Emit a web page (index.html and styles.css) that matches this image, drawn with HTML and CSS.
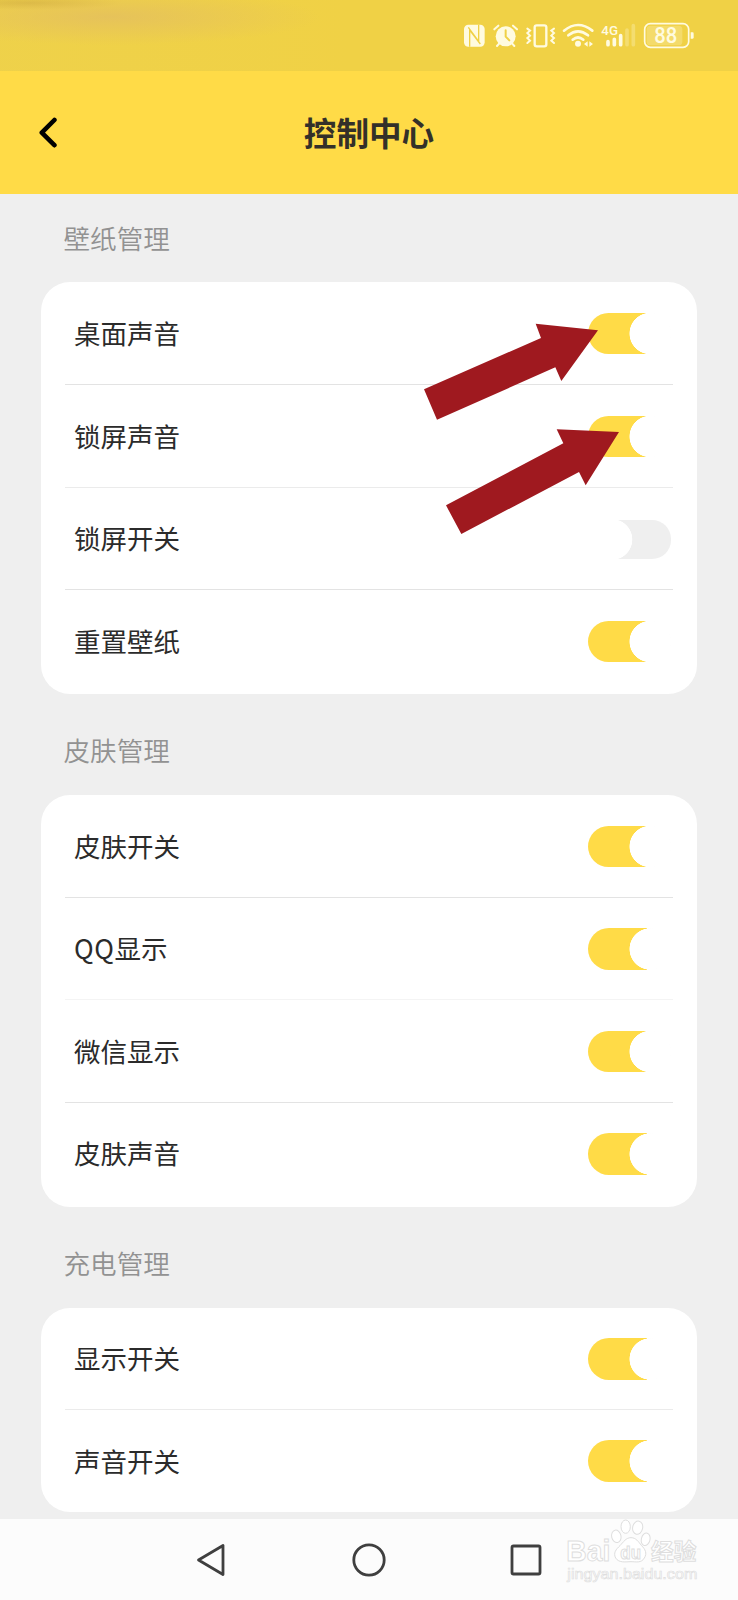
FILE: index.html
```html
<!DOCTYPE html>
<html lang="zh-CN">
<head>
<meta charset="utf-8">
<title>控制中心</title>
<link rel="stylesheet" href="styles.css">
</head>
<body>
<div class="screen">
  <div class="status">
    <svg class="status-icons" viewBox="0 0 894 213" fill="none" stroke="#fffbe0" stroke-linecap="round">
      <!-- NFC -->
      <rect x="72" y="74" width="62" height="66" rx="13" fill="#fffbe0" stroke="none"/>
      <path d="M89 140V90L121 132M116 74V124L85 82" stroke="#f0d145" stroke-width="4" stroke-linecap="butt"/>
      <!-- alarm -->
      <circle cx="197" cy="109" r="30" fill="#fffbe0" stroke="none"/>
      <path d="M163 88L175 77M219 77L231 88M178 130L171 138M216 130L223 138" stroke-width="6"/>
      <path d="M197 91V110L208 121" stroke="#f0d145" stroke-width="6"/>
      <!-- vibrate -->
      <rect x="284" y="76" width="35" height="63" rx="6" stroke-width="7"/>
      <path d="M262 86L270 92L262 99L270 107L262 114L270 122L262 129M342 86L334 92L342 99L334 107L342 114L334 122L342 129" stroke-width="6"/>
      <!-- wifi -->
      <path d="M372 92Q414 58 457 92M385 106Q414 82 444 106M398 119Q414 106 430 119" stroke-width="8"/>
      <circle cx="414" cy="131" r="9" fill="#fffbe0" stroke="none"/>
      <path d="M432 132L443 124V140ZM459 132L448 124V140Z" fill="#fffbe0" stroke="none"/>
      <!-- signal -->
      <path d="M504 125V134M523 118V134M542 107V134" stroke-width="11"/>
      <path d="M561 90V134M580 77V134" stroke-width="11" opacity=".28"/>
      <text class="net" x="484" y="104" textLength="50" lengthAdjust="spacingAndGlyphs">4G</text>
      <!-- battery -->
      <rect x="614" y="71" width="132" height="71" rx="17" stroke-width="5"/>
      <rect x="620" y="77" width="107" height="59" rx="11" fill="#fffbe0" opacity=".25" stroke="none"/>
      <path d="M752 97H758Q761 97 761 101V112Q761 116 758 116H752Z" fill="#fffbe0" stroke="none"/>
      <text class="level" x="643" y="129" textLength="69" lengthAdjust="spacingAndGlyphs">88</text>
    </svg>
  </div>
  <header class="header">
    <svg class="back" viewBox="0 0 20 32"><path d="M15.4 3L2.8 15.7L15.4 28.2" fill="none" stroke="#000" stroke-width="4.6" stroke-linecap="round" stroke-linejoin="round"/></svg>
    <h1 class="title">控制中心</h1>
  </header>
  <main class="content">
    <section class="group">
      <h2 class="group-title">壁纸管理</h2>
      <div class="card">
        <div class="row"><span>桌面声音</span><i class="toggle"></i></div>
        <div class="row soft"><span>锁屏声音</span><i class="toggle"></i></div>
        <div class="row"><span>锁屏开关</span><i class="toggle off"></i></div>
        <div class="row"><span>重置壁纸</span><i class="toggle"></i></div>
      </div>
    </section>
    <section class="group">
      <h2 class="group-title">皮肤管理</h2>
      <div class="card">
        <div class="row"><span>皮肤开关</span><i class="toggle"></i></div>
        <div class="row faint"><span><span class="latin">QQ</span>显示</span><i class="toggle"></i></div>
        <div class="row"><span>微信显示</span><i class="toggle"></i></div>
        <div class="row"><span>皮肤声音</span><i class="toggle"></i></div>
      </div>
    </section>
    <section class="group">
      <h2 class="group-title">充电管理</h2>
      <div class="card short">
        <div class="row soft"><span>显示开关</span><i class="toggle"></i></div>
        <div class="row"><span>声音开关</span><i class="toggle"></i></div>
      </div>
    </section>
  </main>
  <nav class="nav">
    <svg class="nav-icon" viewBox="0 0 36 36"><path d="M29 3.5V32.5L4.5 18Z"/></svg>
    <svg class="nav-icon" viewBox="0 0 36 36"><circle cx="18" cy="18" r="15.2"/></svg>
    <svg class="nav-icon" viewBox="0 0 36 36"><rect x="4" y="4" width="28" height="28" rx="1.5"/></svg>
  </nav>
  <svg class="arrows" viewBox="0 0 1014 870" fill="#9f191f">
    <path d="M72 358L423 204L407 161L594 181L484 333L466 292L111 449Z"/>
    <path d="M138 706L490 520L470 478L657 486L557 646L537 606L184 792Z"/>
  </svg>
  <svg class="watermark" viewBox="0 0 420 216">
    <g fill="#fff" stroke="#dedede" stroke-width="3">
      <path d="M207 53C222 53 229 65 238 76C250 88 256 100 247 114C238 130 222 125 207 125C192 125 171 130 161 114C153 99 162 88 174 77C184 66 192 53 207 53Z"/>
      <ellipse cx="163" cy="49" rx="14" ry="19" transform="rotate(-12 163 49)"/>
      <ellipse cx="191" cy="20" rx="14" ry="20"/>
      <ellipse cx="227" cy="23" rx="15" ry="20" transform="rotate(12 227 23)"/>
      <ellipse cx="251" cy="58" rx="13" ry="19" transform="rotate(14 251 58)"/>
    </g>
    <g class="mark">
      <text class="brand" x="13" y="123" textLength="132" lengthAdjust="spacingAndGlyphs">Bai</text>
      <text class="du" x="175" y="117" textLength="62" lengthAdjust="spacingAndGlyphs">du</text>
      <text class="cn" x="267" y="119" textLength="136" lengthAdjust="spacingAndGlyphs">经验</text>
      <text class="url" x="16" y="178" textLength="390" lengthAdjust="spacingAndGlyphs">jingyan.baidu.com</text>
    </g>
  </svg>
</div>
</body>
</html>
```
FILE: styles.css
```css
* { box-sizing: border-box; }
body {
  margin: 0;
  background: #efefef;
  font-family: "Noto Sans CJK SC", sans-serif;
  color: #2b2b2b;
}
.screen {
  position: relative;
  width: 738px;
  height: 1600px;
  overflow: hidden;
  display: flex;
  flex-direction: column;
}
.status {
  flex: none;
  height: 71px;
  display: flex;
  justify-content: flex-end;
  background:
    radial-gradient(ellipse 210px 28px at 110px 17px, rgba(226, 188, 98, .7), transparent),
    radial-gradient(ellipse 90px 7px at 30px 3px, rgba(205, 170, 55, .6), transparent),
    linear-gradient(90deg, rgba(235, 210, 85, .3), transparent 350px),
    #f0d145;
}
.status-icons { width: 298px; height: 71px; }
.net { font: 500 36px Roboto, sans-serif; fill: #fffbe0; stroke: none; }
.level { font: 500 65px Roboto, sans-serif; fill: #fffbe0; stroke: none; }
.header {
  flex: none;
  height: 123px;
  background: #ffdb47;
  display: grid;
  grid-template-columns: 60px 1fr 60px;
  align-items: center;
}
.back { width: 20px; height: 32px; margin-left: 39px; }
.title {
  margin: 0;
  font-size: 32.6px;
  line-height: 48px;
  font-weight: 700;
  text-align: center;
  color: #333029;
  padding-bottom: 1px;
}
.content { flex: 1; min-height: 0; padding: 0 41px; }
.group-title {
  margin: 0;
  height: 88.4px;
  padding: 24px 0 0 22.5px;
  font-size: 26.6px;
  line-height: 40px;
  font-weight: 350;
  color: #929292;
}
.group + .group .group-title { height: 100.6px; padding-top: 36px; }
.card {
  background: #fff;
  border-radius: 29px;
  padding: 0 24px 2px;
}
.card.short { padding-bottom: 0; }
.row {
  height: 102.6px;
  display: flex;
  align-items: center;
  justify-content: space-between;
  padding: 0 0 0 9px;
  font-size: 26.5px;
  line-height: 40px;
  border-bottom: 1px solid #e3e3e3;
}
.row:last-child { height: 102.2px; border-bottom-color: transparent; }
.row.soft { border-bottom-color: #ebebeb; }
.row.faint { border-bottom-color: #f4f4f4; }
.latin { letter-spacing: .6px; }
.toggle {
  width: 84.5px;
  height: 41.5px;
  margin: 1px .7px 0 0;
  background: radial-gradient(circle at 62.2px 50%, #fff 20.4px, transparent 21px), linear-gradient(90deg, #ffdb47 59px, #fff 59px);
  border-radius: 21px;
}
.toggle.off {
  width: 57px;
  height: 39px;
  margin: 1.4px 2.5px 0 0;
  background: radial-gradient(circle at -2px 50%, #fff 20px, transparent 20.6px), #efefef;
  border-radius: 0 19px 19px 0;
}
.nav {
  flex: none;
  height: 81px;
  background: #fcfcfc;
  display: grid;
  grid-template-columns: repeat(3, 157px);
  justify-content: center;
  justify-items: center;
  padding-top: 22.5px;
}
.nav-icon {
  width: 36px;
  height: 36px;
  fill: none;
  stroke: #3f3f3f;
  stroke-width: 2.8;
  stroke-linejoin: round;
}
.arrows { position: absolute; left: 400px; top: 270px; width: 338px; height: 290px; }
.watermark {
  position: absolute;
  left: 562px;
  top: 1520px;
  width: 140px;
  height: 72px;
  overflow: visible;
}
.mark { fill: #fff; stroke: #dedede; stroke-width: 3; }
.brand { font: 700 89px "Liberation Sans", sans-serif; }
.du { font: 700 55px "Liberation Sans", sans-serif; }
.cn { font: 700 69px "Noto Sans CJK SC", sans-serif; }
.url { font: 400 45px "Liberation Sans", sans-serif; stroke-width: 2; }
```
